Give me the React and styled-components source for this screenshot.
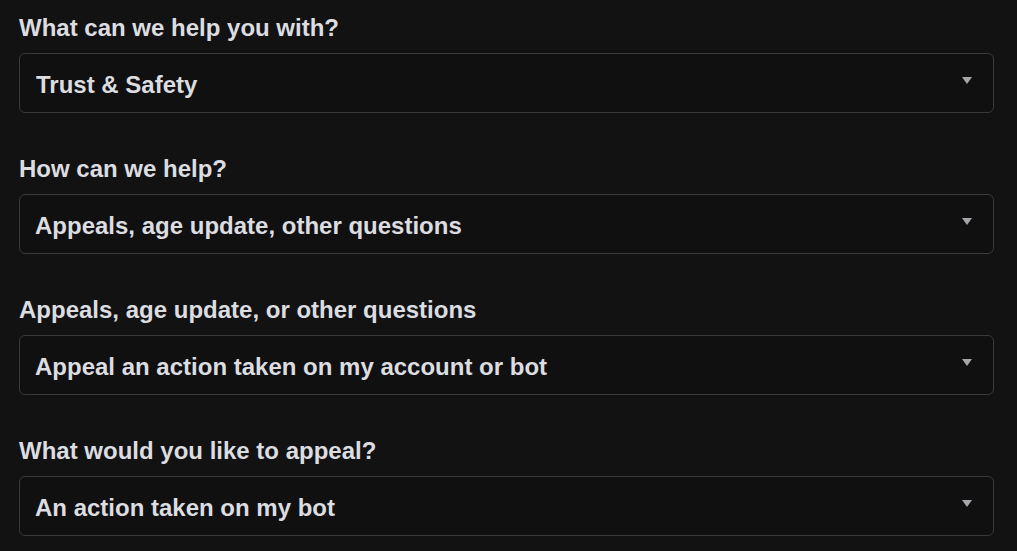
import React from "react";
import styled, { createGlobalStyle } from "styled-components";

const GlobalStyle = createGlobalStyle`
  html, body {
    margin: 0;
    padding: 0;
    background: #121212;
  }
  body {
    font-family: "Liberation Sans", Arial, sans-serif;
    color: #dcdde0;
  }
`;

const Form = styled.div`
  display: flex;
  flex-direction: column;
  gap: 42px;
  padding: 14px 23px 0 19px;
`;

const Field = styled.div`
  display: flex;
  flex-direction: column;
  gap: 11px;
`;

const Label = styled.div`
  font-size: 24px;
  font-weight: 700;
  line-height: 28px;
  color: #dcdde0;
`;

const Select = styled.div`
  position: relative;
  height: 58px;
  box-sizing: border-box;
  height: 60px;
  display: flex;
  align-items: center;
  padding: 4px 0 0 ${(p) => p.$indent || 15}px;
  border: 1px solid #3a3a3c;
  border-radius: 6px;
  background: #101010;
  font-size: 24px;
  font-weight: 700;
  color: #dcdde0;
`;

const Caret = styled.span`
  position: absolute;
  right: 21px;
  top: 23px;
  width: 0;
  height: 0;
  border-left: 5px solid transparent;
  border-right: 5px solid transparent;
  border-top: 7px solid #a4a6aa;
`;

const fields = [
  { label: "What can we help you with?", value: "Trust & Safety", indent: 16 },
  { label: "How can we help?", value: "Appeals, age update, other questions" },
  { label: "Appeals, age update, or other questions", value: "Appeal an action taken on my account or bot" },
  { label: "What would you like to appeal?", value: "An action taken on my bot" },
];

export default function App() {
  return (
    <>
      <GlobalStyle />
      <Form>
        {fields.map((f) => (
          <Field key={f.label}>
            <Label>{f.label}</Label>
            <Select $indent={f.indent}>
              {f.value}
              <Caret />
            </Select>
          </Field>
        ))}
      </Form>
    </>
  );
}
